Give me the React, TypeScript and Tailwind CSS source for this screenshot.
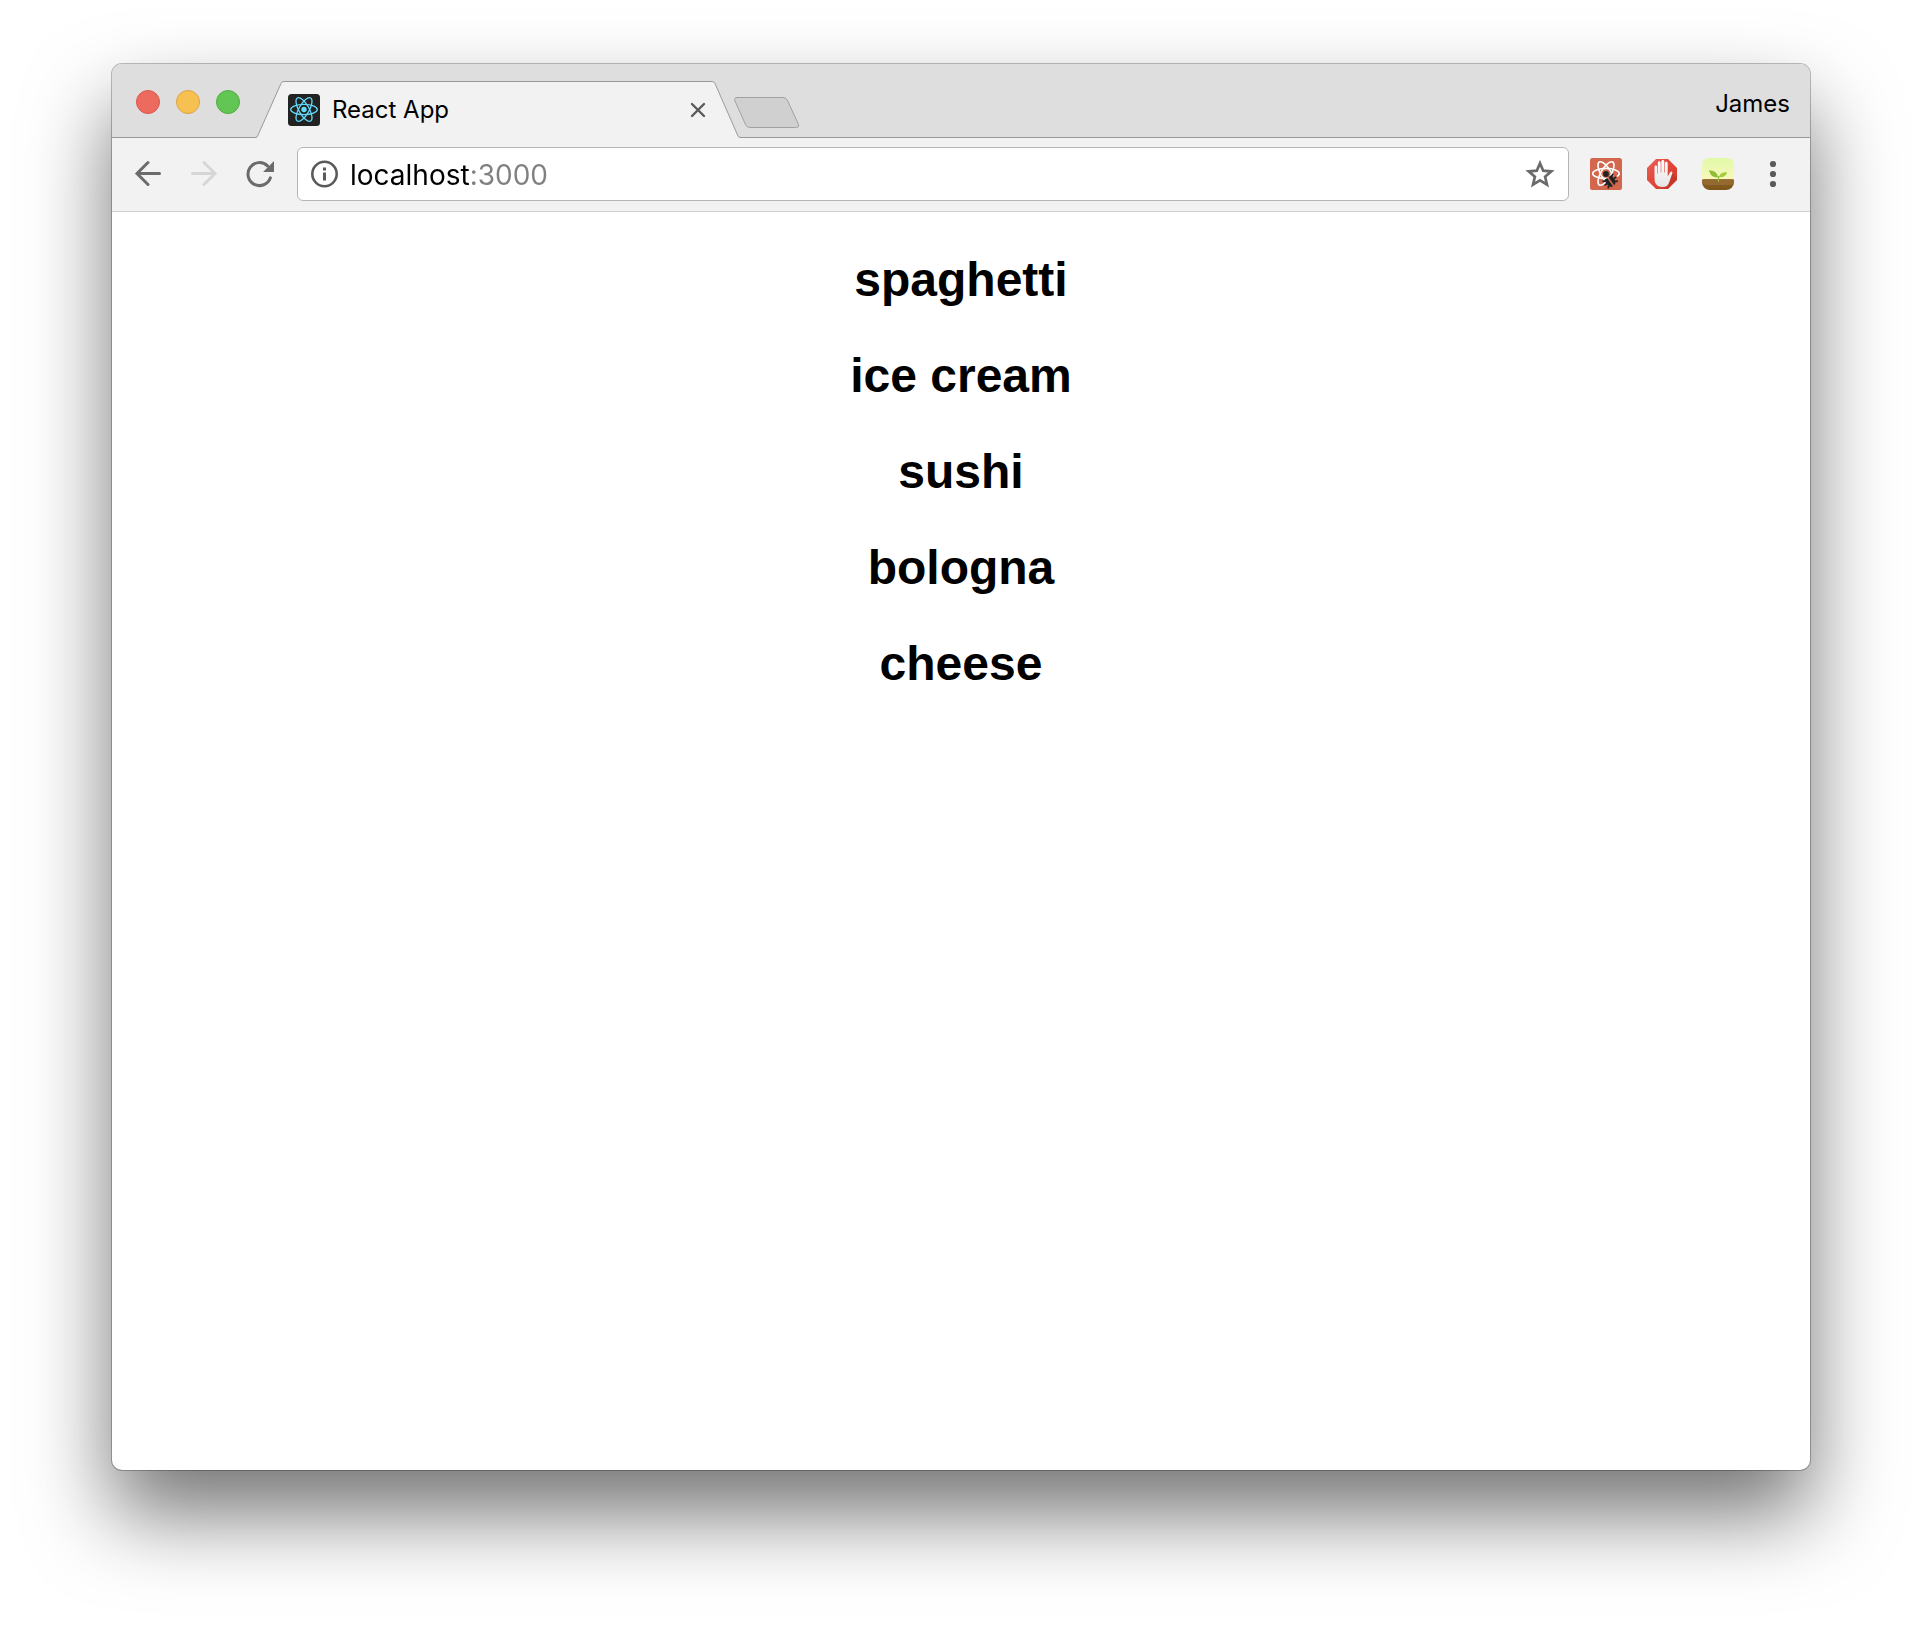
import type { ReactNode } from 'react';

const foods = ['spaghetti', 'ice cream', 'sushi', 'bologna', 'cheese'];

function ReactAtom({ stroke, width }: { stroke: string; width: number }) {
  return (
    <g fill="none" stroke={stroke} strokeWidth={width}>
      <ellipse cx="16" cy="15.5" rx="13.3" ry="5.1" />
      <ellipse cx="16" cy="15.5" rx="13.3" ry="5.1" transform="rotate(60 16 15.5)" />
      <ellipse cx="16" cy="15.5" rx="13.3" ry="5.1" transform="rotate(120 16 15.5)" />
    </g>
  );
}

function Favicon() {
  return (
    <svg viewBox="0 0 32 32" className="size-8 shrink-0" aria-hidden="true">
      <rect width="32" height="32" rx="3.5" fill="#222" />
      <ReactAtom stroke="#61dafb" width={1.3} />
      <circle cx="16" cy="15.5" r="2.7" fill="#61dafb" />
    </svg>
  );
}

function ReactDevIcon() {
  return (
    <svg viewBox="0 0 32 32" className="size-8" aria-hidden="true">
      <rect width="32" height="32" rx="2.5" fill="#d2674e" />
      <ReactAtom stroke="#fff" width={1.6} />
      <path d="M17 20l10-3 1 9-9 5z" fill="#d2674e" />
      <g transform="rotate(-36 19.5 22)">
        <path d="M13 19l2.500 1.500M12.500 23.500h3M13.500 28l2-1.800M26 19l-2.500 1.500M26.500 23.500h-3M25.500 28l-2-1.800" stroke="#222" strokeWidth="1.8" fill="none" />
        <path d="M15 19h3.700v10C16 28.500 15 26.500 15 24zM20.300 19H24v5c0 2.500-1 4.500-3.700 5z" fill="#222" />
      </g>
      <circle cx="16" cy="16" r="2.900" fill="#222" />
    </svg>
  );
}

function StopHandIcon() {
  return (
    <svg viewBox="0 0 32 32" className="size-8" aria-hidden="true">
      <defs>
        <linearGradient id="stop" x1="0" y1="0" x2="1" y2="1">
          <stop offset="0" stopColor="#ea6257" />
          <stop offset=".5" stopColor="#e04539" />
          <stop offset="1" stopColor="#cf3729" />
        </linearGradient>
        <linearGradient id="palm" x1="0" y1="0" x2="0" y2="1">
          <stop offset="0" stopColor="#fff" />
          <stop offset="1" stopColor="#e4e4e4" />
        </linearGradient>
      </defs>
      <path d="M10 1h12l9 9v12l-9 9H10l-9-9V10z" fill="url(#stop)" />
      <path d="M26 14.500l4.500 5V22L22 30.500h-6z" fill="#a02a1c" opacity=".3" />
      <path
        d="M8.500 9.200c0-2.400 2.700-2.400 2.700 0v6.300h.6V5.200c0-2.500 2.900-2.500 2.900 0v9.300h.6V3.900c0-2.500 3-2.500 3 0v10.600h.6V5.600c0-2.500 2.800-2.500 2.800 0v12.900l2.300-4.100c1-1.700 2.900-.9 2.300.9l-3.200 9.100c-1 3.200-3 4.600-6.300 4.600-5.600 0-8.300-3-8.300-8.500z"
        fill="url(#palm)"
      />
    </svg>
  );
}

function SproutIcon() {
  return (
    <svg viewBox="0 0 32 32" className="size-8" aria-hidden="true">
      <defs>
        <linearGradient id="sky" x1="0" y1="0" x2="0" y2="1">
          <stop offset="0" stopColor="#e0f9a6" />
          <stop offset="1" stopColor="#fbf8c0" />
        </linearGradient>
        <linearGradient id="soil" x1="0" y1="0" x2="0" y2="1">
          <stop offset="0" stopColor="#8a612a" />
          <stop offset="1" stopColor="#7d5518" />
        </linearGradient>
      </defs>
      <path d="M7 0h18a7 7 0 0 1 7 7v16H0V7a7 7 0 0 1 7-7z" fill="url(#sky)" />
      <path d="M0 22.500Q0 21.300 2 21.300H30Q32 21.300 32 22.500V24a8 8 0 0 1-8 8H8a8 8 0 0 1-8-8z" fill="url(#soil)" />
      <path d="M0 22.500Q0 21.300 2 21.300H30Q32 21.300 32 22.500L31.500 25Q30 27 27 27H5Q2 27 .5 25z" fill="#956a31" />
      <path d="M16.500 24v-6" stroke="#93b93a" strokeWidth="1.200" fill="none" />
      <path d="M16 19.200C10 19.500 8 16.500 7 12.200c4.500.300 8.500 2 9 7z" fill="#8fbf35" />
      <path d="M17 19.200c.5-3.500 3.500-5.200 8.200-4.900-1.200 4-4 5.400-8.200 4.900z" fill="#a3cf3c" />
    </svg>
  );
}

function IconButton({ label, className, children }: { label: string; className: string; children: ReactNode }) {
  return (
    <button type="button" aria-label={label} className={`flex shrink-0 items-center justify-center ${className}`}>
      {children}
    </button>
  );
}

function TabStrip() {
  return (
    <header className="flex h-[74px] bg-[#dedede] pr-5 pl-6 shadow-[inset_0_-1px_0_#999]">
      <div className="flex items-center gap-4 pt-0.5">
        <button type="button" aria-label="Close window" className="size-6 rounded-full border border-[#d9574e] bg-[#ed6a5f]" />
        <button type="button" aria-label="Minimize window" className="size-6 rounded-full border border-[#dca443] bg-[#f6c150]" />
        <button type="button" aria-label="Zoom window" className="size-6 rounded-full border border-[#51ac42] bg-[#62c655]" />
      </div>
      <div className="relative ml-4 flex h-[57px] w-[484px] items-center self-end px-8">
        <svg viewBox="0 0 484 57" className="absolute inset-0 h-full w-full" aria-hidden="true">
          <path d="M0 56.500Q1.200 56 1.600 55L25 2.500Q26 .5 28 .5H456Q458 .5 459 2.500L482 55Q482.400 56 484 56.500V57H0z" fill="#f2f2f2" />
          <path d="M0 56.500Q1.200 56 1.600 55L25 2.500Q26 .5 28 .5H456Q458 .5 459 2.500L482 55Q482.400 56 484 56.500" fill="none" stroke="#999" />
        </svg>
        <div className="relative flex w-full items-center">
          <Favicon />
          <span className="ml-3 flex-1 text-2xl">React App</span>
          <IconButton label="Close tab" className="size-5">
            <svg viewBox="0 0 20 20" className="size-5" aria-hidden="true">
              <path d="M4 4l12 12M16 4L4 16" stroke="#5a5a5a" strokeWidth="2.400" strokeLinecap="round" />
            </svg>
          </IconButton>
        </div>
      </div>
      <button type="button" aria-label="New tab" className="-ml-1.5 mb-[9px] self-end">
        <svg viewBox="0 0 66 32" className="h-8 w-[66px]" aria-hidden="true">
          <path d="M3 .5H49Q52 .5 53.500 3.500L64.500 27.500Q65.500 30.500 62.500 30.500H16Q13 30.500 11.500 27.500L1 4Q-.2 .5 3 .5z" fill="#d0d0d0" stroke="#a0a0a0" />
        </svg>
      </button>
      <button type="button" className="ml-auto pt-1.5 text-2xl leading-8">James</button>
    </header>
  );
}

function Toolbar() {
  return (
    <nav aria-label="Browser toolbar" className="flex items-center border-b border-[#cfcfcf] bg-[#f2f2f2] pt-[9px] pr-5 pb-[10px] pl-[22px]">
      <div className="flex gap-7">
        <IconButton label="Back" className="size-7">
          <svg viewBox="0 0 28 28" className="size-7" fill="none" stroke="#6b6b6b" strokeWidth="3" strokeLinecap="round" aria-hidden="true">
            <path d="M25.500 13.500H3M14 2.500L3 13.500l11 11" />
          </svg>
        </IconButton>
        <IconButton label="Forward" className="size-7">
          <svg viewBox="0 0 28 28" className="size-7" fill="none" stroke="#d6d6d6" strokeWidth="3" strokeLinecap="round" aria-hidden="true">
            <path d="M2.500 13.500H25M14 2.500l11 11-11 11" />
          </svg>
        </IconButton>
        <IconButton label="Reload" className="size-7">
          <svg viewBox="0 0 28 28" className="size-7" aria-hidden="true">
            <path d="M24.400 17.800A11.500 11.500 0 1 1 21.500 5.800" fill="none" stroke="#6b6b6b" strokeWidth="3" strokeLinecap="round" />
            <path d="M28 1v10.900H17.100z" fill="#6b6b6b" />
          </svg>
        </IconButton>
      </div>
      <div className="ml-[23px] flex h-[54px] min-w-0 flex-1 items-center rounded-md border border-[#b5b5b5] bg-white px-[13px]">
        <IconButton label="Site information" className="size-7">
          <svg viewBox="0 0 28 28" className="size-7" aria-hidden="true">
            <circle cx="13.500" cy="14" r="12.200" fill="none" stroke="#5a5a5a" strokeWidth="2.600" />
            <path d="M12 7.500h3v3h-3zM12 12.500h3v8h-3z" fill="#5a5a5a" />
          </svg>
        </IconButton>
        <input
          type="text"
          aria-label="Address"
          defaultValue="localhost:3000"
          className="ml-[11px] min-w-0 flex-1 bg-[linear-gradient(to_right,#000_120px,#808080_120px)] bg-clip-text pt-0.5 text-[28px] leading-10 text-transparent caret-black outline-none"
        />
        <IconButton label="Bookmark this page" className="size-[30px]">
          <svg viewBox="0 0 30 30" className="size-[30px]" aria-hidden="true">
            <path d="M15 4.200l3.200 7.500 8.100.7-6.200 5.300 1.900 7.900-7-4.200-7 4.200 1.900-7.900-6.200-5.300 8.100-.7z" fill="none" stroke="#6b6b6b" strokeWidth="2.700" />
          </svg>
        </IconButton>
      </div>
      <div className="ml-[21px] flex gap-6">
        <IconButton label="React Developer Tools" className="size-8"><ReactDevIcon /></IconButton>
        <IconButton label="AdBlock" className="size-8"><StopHandIcon /></IconButton>
        <IconButton label="Sprout" className="size-8"><SproutIcon /></IconButton>
        <IconButton label="Menu" className="size-8">
          <svg viewBox="0 0 32 32" className="size-8" fill="#5a5a5a" aria-hidden="true">
            <circle cx="15" cy="6" r="3.100" />
            <circle cx="15" cy="16" r="3.100" />
            <circle cx="15" cy="26" r="3.100" />
          </svg>
        </IconButton>
      </div>
    </nav>
  );
}

export default function App() {
  return (
    <div className="min-h-screen bg-white px-28 pt-16 pb-40 font-['Inter',sans-serif] text-black">
      <div className="min-h-[calc(100vh-224px)] overflow-hidden rounded-[10px] bg-white shadow-[0_0_0_1px_rgba(0,0,0,0.25),0_44px_84px_rgba(0,0,0,0.55)]">
        <TabStrip />
        <Toolbar />
        <main className="flex flex-col gap-10 py-10 text-center font-['Liberation_Sans',Arial,sans-serif]">
          {foods.map((food) => (
            <h1 key={food} className="text-5xl leading-[56px] font-bold">{food}</h1>
          ))}
        </main>
      </div>
    </div>
  );
}
